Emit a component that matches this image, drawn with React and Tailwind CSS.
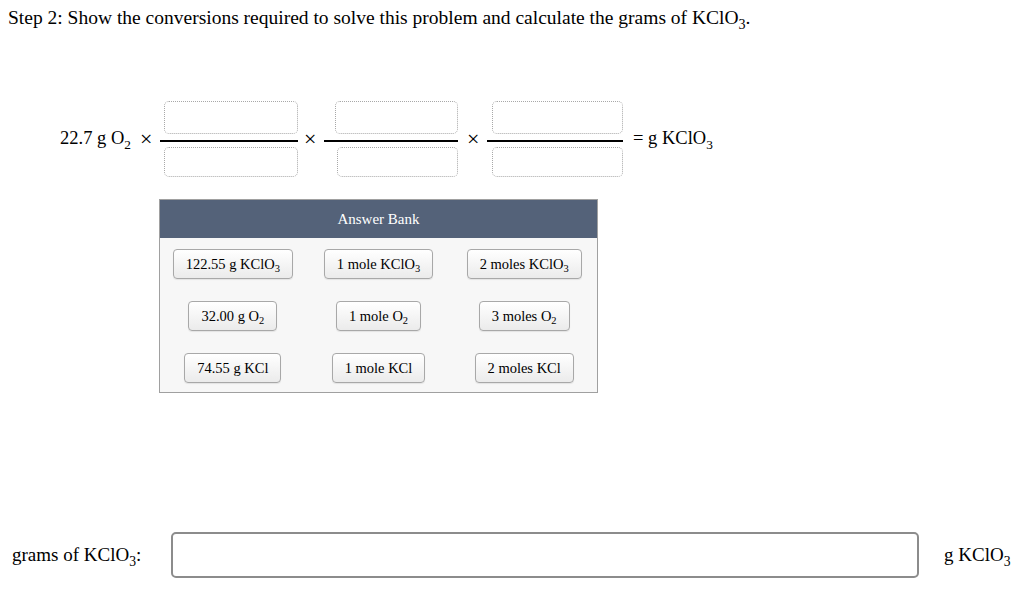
const SERIF = "[font-family:'Liberation_Serif','Times_New_Roman',serif]";

function Sub({ children }) {
  return <sub className="bottom-[-0.35em] text-[0.72em]">{children}</sub>;
}

function Slot({ className }) {
  return (
    <div
      className={`rounded-[5px] border border-dotted border-[#a8a8a8] bg-white ${className}`}
    />
  );
}

// one fraction slot: numerator box, bar, denominator box
function Fraction({ className, top, bottom }) {
  return (
    <div className={`flex flex-col items-end ${className}`}>
      <Slot className={`h-[33px] ${top}`} />
      <div className="mt-[6px] h-[2px] w-full bg-black" />
      <Slot className={`mt-[5px] h-[30px] ${bottom}`} />
    </div>
  );
}

function Times({ className }) {
  return <span className={`w-[20px] text-[22px] leading-none ${className}`}>×</span>;
}

function Chip({ children }) {
  return (
    <button className="h-[30px] rounded-[4px] border border-[#a8a8a8] bg-gradient-to-b from-white to-[#ebebeb] px-[12px] text-[14.5px] leading-none text-black shadow-[0_1px_1px_rgba(0,0,0,0.08)]">
      {children}
    </button>
  );
}

const bank = [
  <>122.55 g KClO<Sub>3</Sub></>,
  <>1 mole KClO<Sub>3</Sub></>,
  <>2 moles KClO<Sub>3</Sub></>,
  <>32.00 g O<Sub>2</Sub></>,
  <>1 mole O<Sub>2</Sub></>,
  <>3 moles O<Sub>2</Sub></>,
  <>74.55 g KCl</>,
  <>1 mole KCl</>,
  <>2 moles KCl</>,
];

export default function App() {
  return (
    <div className={`h-[610px] w-[1024px] overflow-hidden bg-white text-black ${SERIF}`}>
      <p className="px-[8px] pt-[6px] text-[19.5px] leading-[24px]">
        Step 2: Show the conversions required to solve this problem and calculate the grams of KClO
        <Sub>3</Sub>.
      </p>

      <div className="mt-[71px] flex items-center pl-[60px] text-[18.5px]">
        <span className="w-[80px] whitespace-nowrap">
          22.7 g O<Sub>2</Sub>
        </span>
        <Times />
        <Fraction className="w-[138px]" top="w-[134px]" bottom="w-[134px]" />
        <Times className="ml-[6px]" />
        <Fraction className="w-[134px]" top="w-[123px]" bottom="w-[121px]" />
        <Times className="ml-[9px]" />
        <Fraction className="w-[136px]" top="w-[131px]" bottom="w-[131px]" />
        <span className="ml-[10px] whitespace-nowrap">
          = g KClO<Sub>3</Sub>
        </span>
      </div>

      <div className="ml-[159px] mt-[22px] w-[439px] border border-[#a0a0a0] bg-[#f7f7f7]">
        <div className="flex h-[38px] items-center justify-center bg-[#546279] text-[15px] text-white">
          Answer Bank
        </div>
        <div className="grid grid-cols-3 gap-y-[22px] pb-[9px] pt-[11px]">
          {bank.map((item, i) => (
            <div key={i} className="flex justify-center">
              <Chip>{item}</Chip>
            </div>
          ))}
        </div>
      </div>

      <div className="mt-[139px] flex items-center text-[19px]">
        <span className="w-[171px] whitespace-nowrap pl-[12px]">
          grams of KClO<Sub>3</Sub>:
        </span>
        <div className="h-[46px] w-[748px] rounded-[5px] border-2 border-[#8c8c8c] bg-white" />
        <span className="ml-[25px] whitespace-nowrap">
          g KClO<Sub>3</Sub>
        </span>
      </div>
    </div>
  );
}
